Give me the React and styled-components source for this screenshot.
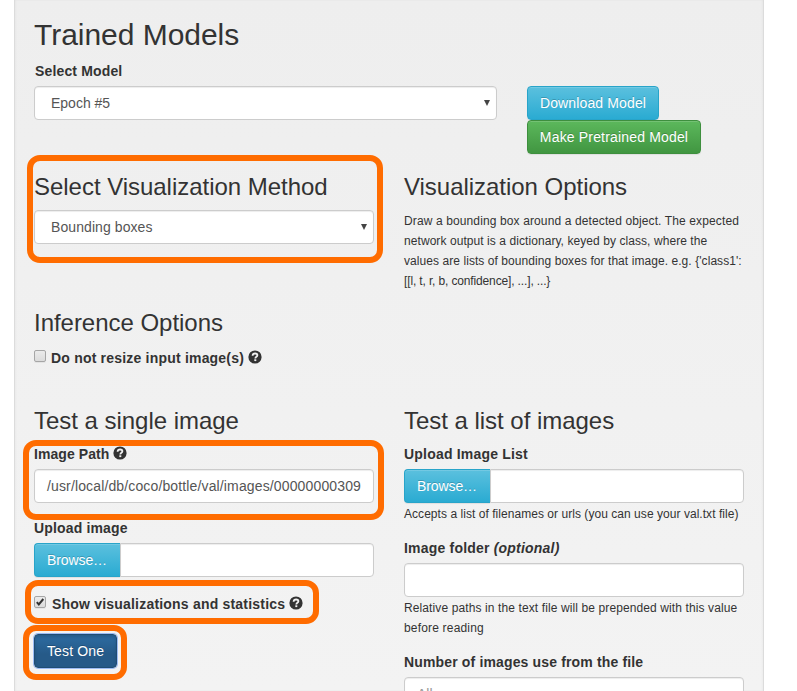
import React from "react";
import styled, { createGlobalStyle } from "styled-components";

const GlobalStyle = createGlobalStyle`
  *, *::before, *::after { box-sizing: border-box; }
  html, body { margin: 0; background: #fff; overflow: hidden; }
  body {
    font-family: "Liberation Sans", Arial, sans-serif;
    font-size: 14px;
    line-height: 20px;
    color: #333;
  }
`;

const Page = styled.main`
  height: 691px;
  overflow: hidden;
  padding-left: 14px;
`;

const Well = styled.section`
  width: 750px;
  height: 691px;
  padding: 18px 19px 0;
  border: solid #dcdcdc;
  border-width: 0 1px;
  background: linear-gradient(#eee, #f3f3f3);
  box-shadow: inset 1px 0 2px rgba(0, 0, 0, 0.03), inset -1px 0 2px rgba(0, 0, 0, 0.03);
`;

const Row = styled.div`
  display: grid;
  grid-template-columns: ${(p) => p.$columns || "340px 340px"};
  column-gap: 30px;
  height: ${(p) => p.$height};
  align-items: start;
`;

const Column = styled.div`
  display: flex;
  flex-direction: column;
  padding-top: ${(p) => p.$top || 0};
`;

const Title = styled.h2`
  margin: 0 0 10px;
  font-size: 30px;
  line-height: 33px;
  font-weight: 400;
  letter-spacing: -0.03px;
`;

const Heading = styled.h3`
  margin: 0 0 10px;
  font-size: 24px;
  line-height: 26px;
  font-weight: 400;
  white-space: nowrap;
  letter-spacing: -0.03px;
`;

const Label = styled.label`
  display: flex;
  align-items: flex-start;
  height: 20px;
  margin-bottom: 5px;
  padding-left: ${(p) => p.$indent || 0};
  font-weight: 700;
  white-space: pre;
  letter-spacing: ${(p) => p.$tracking || "0.2px"};
`;

const Field = styled.div`
  display: flex;
  justify-content: space-between;
  height: 34px;
  padding: 6px 12px;
  border: 1px solid #ccc;
  border-radius: 4px;
  background: #fff;
  box-shadow: inset 0 1px 1px rgba(0, 0, 0, 0.075);
  color: ${(p) => (p.$muted ? "#999" : "#555")};
  white-space: nowrap;
  letter-spacing: ${(p) => p.$tracking || 0};
`;

const SelectField = styled(Field)`
  padding: 6px 5px 6px 16px;
`;

const Arrow = styled.svg`
  width: 8px;
  height: 8px;
  margin-top: 6px;
`;

const Button = styled.button`
  align-self: flex-start;
  height: 34px;
  width: ${(p) => p.$width};
  padding: 6px 0;
  border: 1px solid ${(p) => p.$edge};
  border-radius: 4px;
  background: linear-gradient(${(p) => p.$from}, ${(p) => p.$to});
  box-shadow: inset 0 1px 0 rgba(255, 255, 255, 0.15), 0 1px 1px rgba(0, 0, 0, 0.075);
  color: #fff;
  font: 14px/20px "Liberation Sans", Arial, sans-serif;
  letter-spacing: ${(p) => p.$tracking || 0};
  text-shadow: 0 -1px 0 rgba(0, 0, 0, 0.2);
  white-space: nowrap;
`;

const InfoButton = styled(Button).attrs({ $edge: "#28a4c9", $from: "#5bc0de", $to: "#2aabd2" })``;

const SuccessButton = styled(Button).attrs({ $edge: "#3e8f3e", $from: "#5cb85c", $to: "#419641" })``;

const FocusedButton = styled(Button).attrs({ $edge: "#204d74", $from: "#2d6ca2", $to: "#265a88" })`
  background: linear-gradient(#2d6ca2, #265a88 60%);
  box-shadow: inset 0 2px 3px rgba(0, 0, 0, 0.15), 0 0 0 1px #9dbdf5;
`;

const FileGroup = styled.div`
  display: flex;
  height: 34px;
`;

const BrowseButton = styled(InfoButton)`
  padding-left: 12px;
  border-right-width: 0;
  border-radius: 4px 0 0 4px;
  text-align: left;
`;

const FileName = styled(Field)`
  flex: 1;
  border-radius: 0 4px 4px 0;
`;

const Note = styled.p`
  margin: 0;
  padding-top: 1px;
  font-size: 12px;
  line-height: 20px;
`;

const NoteLine = styled.span`
  display: block;
  white-space: nowrap;
  letter-spacing: ${(p) => p.$tracking || 0};
`;

const CheckLine = styled.div`
  display: flex;
  align-items: flex-start;
  gap: ${(p) => p.$gap};
  height: 20px;
`;

const CheckBox = styled.span`
  display: flex;
  flex: none;
  width: 12px;
  height: 12px;
  margin-top: 2px;
  border: 1px solid #a6a6a6;
  border-radius: 2px;
  background: linear-gradient(#ebebeb, #dcdcdc);
  box-shadow: 0 1px 0 rgba(0, 0, 0, 0.05);
`;

const Help = styled.svg`
  flex: none;
  width: 14px;
  height: 14px;
  margin: 2px 0 0 3.5px;
`;

const Marked = styled.div`
  position: relative;
  display: flex;
  flex-direction: column;
  margin-top: ${(p) => p.$top || 0};
  align-self: ${(p) => (p.$shrink ? "flex-start" : "auto")};
`;

/* Highlight ring drawn over the marked controls. */
const Ring = styled.span`
  position: absolute;
  inset: ${(p) => p.$inset};
  border: 6px solid #ff6c00;
  border-radius: 13px;
  pointer-events: none;
`;

const Spacer = styled.div`
  height: ${(p) => p.$size};
`;

const HelpIcon = () => (
  <Help viewBox="0 0 14 14">
    <circle cx="7" cy="7" r="6.6" fill="#333" />
    <path d="M4.6 5.7C4.7 4.1 5.7 3.5 7.1 3.5c1.4 0 2.3.7 2.3 1.8 0 1.5-2.1 1.4-2.1 3.1" fill="none" stroke="#f1f1f1" strokeWidth="1.8" />
    <path d="M6.3 9.3h2v1.8h-2z" fill="#f1f1f1" />
  </Help>
);

const DropArrow = () => (
  <Arrow viewBox="0 0 8 8">
    <path d="M1 1h6L4 7z" fill="#444" />
  </Arrow>
);

const FilePicker = () => (
  <FileGroup>
    <BrowseButton $width="86px" $tracking="-0.1px">Browse…</BrowseButton>
    <FileName />
  </FileGroup>
);

export default function App() {
  return (
    <>
      <GlobalStyle />
      <Page>
        <Well>
          <Title>Trained Models</Title>
          <Row $columns="463px 1fr" $height="113px">
            <Column>
              <Label $indent="1px" $tracking="0.15px">Select Model</Label>
              <SelectField>Epoch #5<DropArrow /></SelectField>
            </Column>
            <Column $top="25px">
              <InfoButton $width="132px" $tracking="0.14px">Download Model</InfoButton>
              <SuccessButton $width="174px" $tracking="0.17px">Make Pretrained Model</SuccessButton>
            </Column>
          </Row>

          <Row $height="136px">
            <Marked>
              <Heading>Select Visualization Method</Heading>
              <SelectField $tracking="0.08px">Bounding boxes<DropArrow /></SelectField>
              <Ring $inset="-19px -9px -19px -7px" />
            </Marked>
            <Column>
              <Heading>Visualization Options</Heading>
              <Note>
                <NoteLine $tracking="0.12px">Draw a bounding box around a detected object. The expected</NoteLine>
                <NoteLine $tracking="0.07px">network output is a dictionary, keyed by class, where the</NoteLine>
                <NoteLine $tracking="0.065px">values are lists of bounding boxes for that image. e.g. {"{'class1':"}</NoteLine>
                <NoteLine $tracking="-0.14px">{"[[l, t, r, b, confidence], ...], ...}"}</NoteLine>
              </Note>
            </Column>
          </Row>

          <Row $height="98px">
            <Column>
              <Heading>Inference Options</Heading>
              <Spacer $size="2px" />
              <CheckLine $gap="5px">
                <CheckBox />
                <Label>Do not resize input image(s)<HelpIcon /></Label>
              </CheckLine>
            </Column>
          </Row>

          <Row>
            <Column>
              <Heading>Test a single image</Heading>
              <Marked>
                <Label $tracking="0.08px">Image Path<HelpIcon /></Label>
                <Field $tracking="0.137px">/usr/local/db/coco/bottle/val/images/00000000309</Field>
                <Ring $inset="-4px -10px -17px -11px" />
              </Marked>
              <Spacer $size="15px" />
              <Label $tracking="0.15px">Upload image</Label>
              <FilePicker />
              <Marked $top="17px" $shrink>
                <CheckLine $gap="6px">
                  <CheckBox>
                    <svg width="10" height="10" viewBox="0 0 10 10">
                      <path d="M1.8 5.2l2 2.2L8.3 2" fill="none" stroke="#333" strokeWidth="2" />
                    </svg>
                  </CheckBox>
                  <Label>Show visualizations and statistics<HelpIcon /></Label>
                </CheckLine>
                <Ring $inset="-14px -16px -10px -9px" />
              </Marked>
              <Marked $top="20px" $shrink>
                <FocusedButton $width="83px" $tracking="0.14px">Test One</FocusedButton>
                <Ring $inset="-9px -10px -12px -11px" />
              </Marked>
            </Column>
            <Column>
              <Heading>Test a list of images</Heading>
              <Label>Upload Image List</Label>
              <FilePicker />
              <Note><NoteLine $tracking="0.045px">Accepts a list of filenames or urls (you can use your val.txt file)</NoteLine></Note>
              <Spacer $size="14px" />
              <Label>Image folder <em>(optional)</em></Label>
              <Field />
              <Note>
                <NoteLine $tracking="0.11px">Relative paths in the text file will be prepended with this value</NoteLine>
                <NoteLine $tracking="0.18px">before reading</NoteLine>
              </Note>
              <Spacer $size="14px" />
              <Label $tracking="0.15px">Number of images use from the file</Label>
              <Field $muted>All</Field>
            </Column>
          </Row>
        </Well>
      </Page>
    </>
  );
}
